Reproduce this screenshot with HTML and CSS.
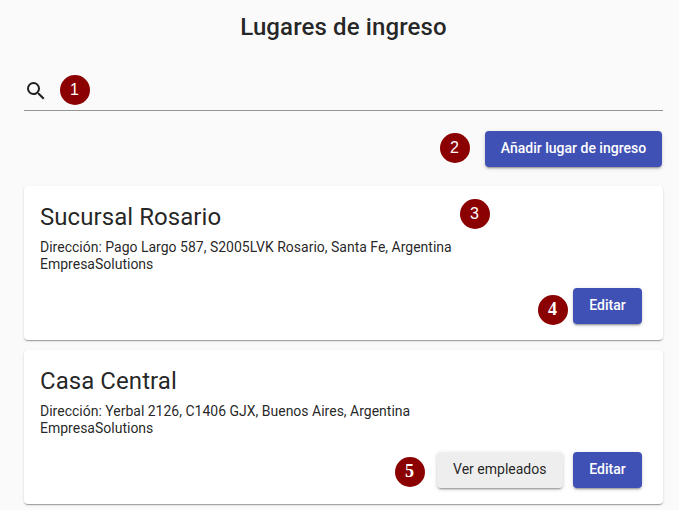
FILE: index.html
```html
<!DOCTYPE html>
<html lang="es">
<head>
    <meta charset="UTF-8">
    <meta name="viewport" content="width=device-width, initial-scale=1.0">
    <title>Lugares de ingreso</title>

    <link rel="stylesheet" href="styles.css">
</head>
<body>
    <div id="workspace">
        <h1 class="page-title">Lugares de ingreso</h1>

        <!-- search -->
        <div class="search">
            <svg class="search-icon" viewBox="0 0 24 24" width="24" height="24">
                <path fill="#212121" d="M15.5 14h-.79l-.28-.27A6.47 6.47 0 0 0 16 9.5 6.5 6.5 0 1 0 9.5 16c1.61 0 3.09-.59 4.23-1.57l.27.28v.79l5 4.99L20.49 19l-4.99-5zm-6 0C7.01 14 5 11.99 5 9.5S7.01 5 9.5 5 14 7.01 14 9.5 11.99 14 9.5 14z"/>
            </svg>
        </div>

        <div class="toolbar">
            <button class="btn btn-primary btn-add">Añadir lugar de ingreso</button>
        </div>

        <!-- places -->
        <div class="card">
            <h2 class="card-title">Sucursal Rosario</h2>
            <p class="card-text">Dirección: Pago Largo 587, S2005LVK Rosario, Santa Fe, Argentina<br>EmpresaSolutions</p>
            <div class="card-actions">
                <button class="btn btn-primary btn-edit">Editar</button>
            </div>
        </div>

        <div class="card">
            <h2 class="card-title">Casa Central</h2>
            <p class="card-text">Dirección: Yerbal 2126, C1406 GJX, Buenos Aires, Argentina<br>EmpresaSolutions</p>
            <div class="card-actions">
                <button class="btn btn-plain">Ver empleados</button>
                <button class="btn btn-primary btn-edit">Editar</button>
            </div>
        </div>
    </div>

    <!-- numbered callouts -->
    <span class="badge badge-1">1</span>
    <span class="badge badge-2">2</span>
    <span class="badge badge-3">3</span>
    <span class="badge badge-serif badge-4">4</span>
    <span class="badge badge-serif badge-5">5</span>
</body>
</html>
```

FILE: styles.css
```css
html, body {
    margin: 0;
    height: 100%;
    overflow: hidden;
}
body {
    position: relative;
    background-color: rgb(250, 250, 250);
    color: rgba(0, 0, 0, 0.87);
    font-family: Roboto, "Liberation Sans", sans-serif;
}
#workspace {
    padding: 0 16px 0 24px;
}
.page-title {
    margin: 0;
    padding-top: 11px;
    height: 41px;
    line-height: 32px;
    font-size: 24px;
    font-weight: 500;
    letter-spacing: 0.12px;
    text-align: center;
}
.search {
    display: flex;
    align-items: center;
    height: 59px;
    box-sizing: border-box;
    padding-top: 19px;
    border-bottom: 1px solid rgb(148, 148, 148);
}
.toolbar {
    display: flex;
    justify-content: flex-end;
    padding: 20px 1px 19px 0;
}
.btn {
    height: 36px;
    padding: 0 0 2px;
    border: none;
    border-radius: 4px;
    font-family: inherit;
    font-size: 14px;
    font-weight: 500;
    cursor: pointer;
    box-shadow: 0 3px 1px -2px rgba(0, 0, 0, 0.2), 0 2px 2px 0 rgba(0, 0, 0, 0.14), 0 1px 5px 0 rgba(0, 0, 0, 0.12);
}
.btn-primary {
    background-color: rgb(63, 81, 181);
    color: rgb(255, 255, 255);
}
.btn-plain {
    width: 126.5px;
    background-color: rgb(238, 238, 238);
    color: rgba(0, 0, 0, 0.87);
    font-weight: 400;
}
.btn-add {
    width: 177px;
}
.btn-edit {
    width: 69px;
}
.card {
    height: 154px;
    box-sizing: border-box;
    margin-bottom: 10px;
    padding: 15px 16px 16px;
    display: flex;
    flex-direction: column;
    background-color: rgb(255, 255, 255);
    border-radius: 4px;
    box-shadow: 0 2px 1px -1px rgba(0, 0, 0, 0.2), 0 1px 1px 0 rgba(0, 0, 0, 0.14), 0 1px 3px 0 rgba(0, 0, 0, 0.12);
}
.card-title {
    margin: 0 0 6px;
    line-height: 32px;
    font-size: 24px;
    font-weight: 400;
    letter-spacing: 0.06px;
}
.card-text {
    margin: 0;
    line-height: 17px;
    font-size: 14px;
}
.card-actions {
    margin-top: auto;
    display: flex;
    justify-content: flex-end;
    gap: 10px;
    padding-right: 5px;
}
.badge {
    position: absolute;
    width: 30px;
    height: 30px;
    border-radius: 50%;
    background-color: rgb(139, 0, 0);
    color: rgb(255, 255, 255);
    font-family: "Liberation Sans", sans-serif;
    font-size: 16px;
    line-height: 29px;
    text-align: center;
}
.badge-serif {
    font-family: "Liberation Serif", serif;
    font-size: 18px;
    font-weight: bold;
}
.badge-1 { left: 59.5px; top: 74.5px; }
.badge-2 { left: 439.5px; top: 132.5px; }
.badge-3 { left: 459.5px; top: 198.5px; }
.badge-4 { left: 537.5px; top: 294.5px; }
.badge-5 { left: 394.5px; top: 456.5px; }
```
